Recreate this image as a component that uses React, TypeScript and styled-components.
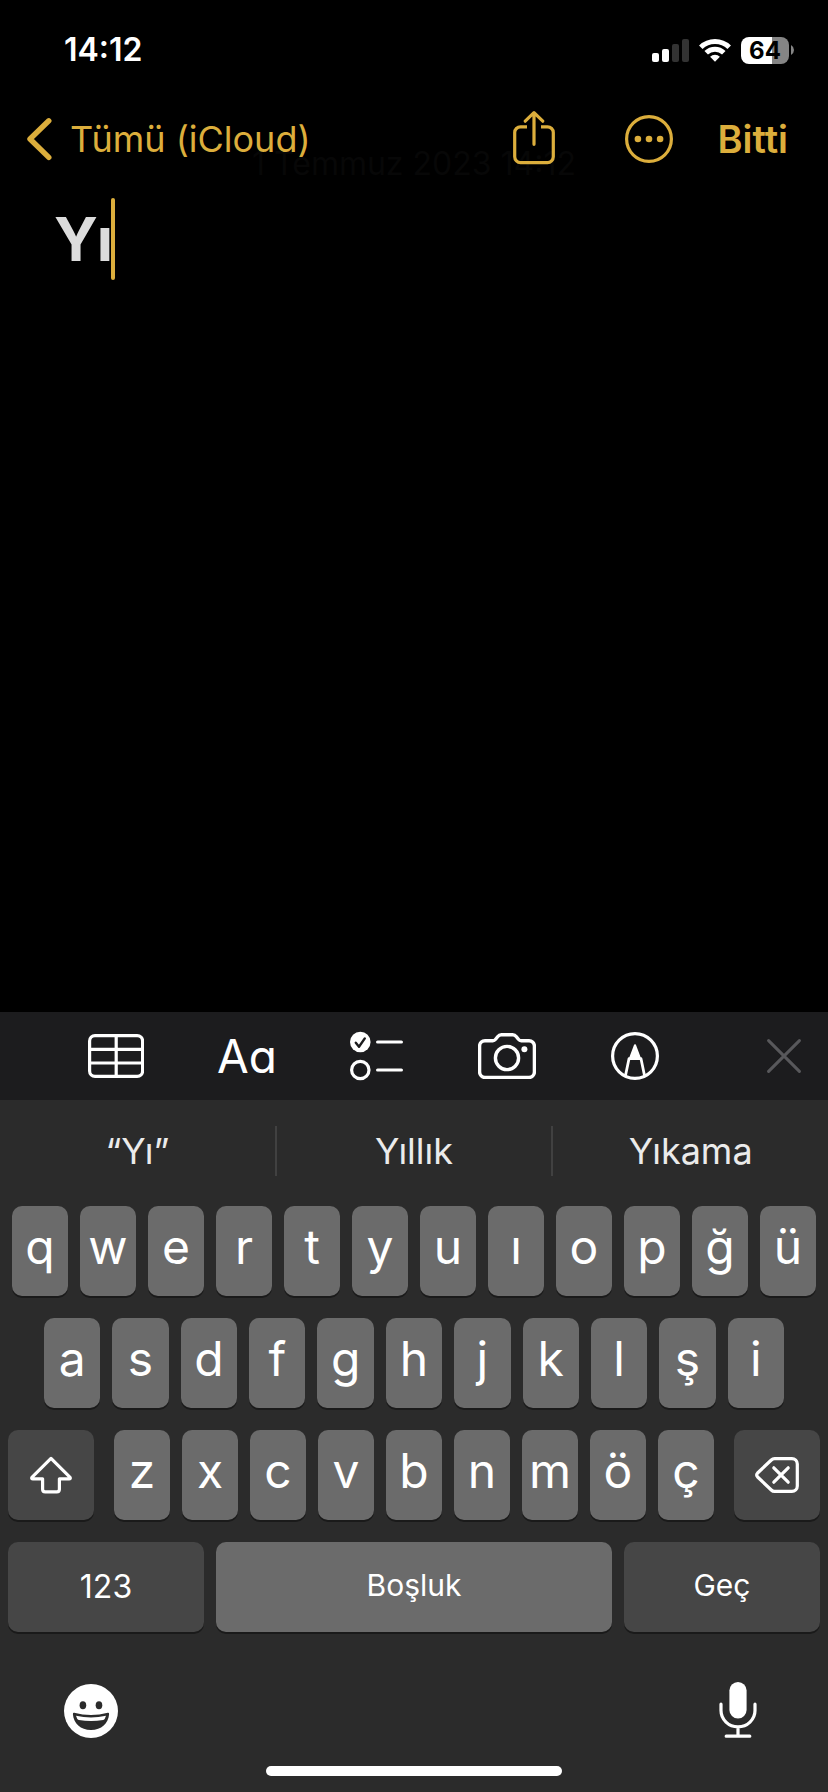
import React, { useState } from "react";
import styled, { createGlobalStyle } from "styled-components";

const gold = "#dcae3c";

const GlobalStyle = createGlobalStyle`
  *, *::before, *::after { box-sizing: border-box; }
  html, body { margin: 0; background: #000; }
  body, button, textarea { font-family: Inter, "Noto Sans", sans-serif; }
  svg { display: block; flex: none; }
`;

const Screen = styled.div`
  display: flex;
  flex-direction: column;
  min-height: 100vh;
  background: #000;
`;

const PlainButton = styled.button`
  display: flex;
  align-items: center;
  justify-content: center;
  margin: 0;
  padding: 0;
  border: 0;
  background: none;
  color: inherit;
  cursor: pointer;
`;

const StatusBar = styled.div`
  display: flex;
  align-items: center;
  justify-content: space-between;
  height: 100px;
  padding: 0 34px 0 64px;
  color: #fff;
`;

const Clock = styled.time`
  font-size: 32px;
  font-weight: 600;
  line-height: 40px;
`;

const StatusIcons = styled.div`
  display: flex;
  align-items: center;
  gap: 10px;
`;

const Battery = styled.div`
  display: flex;
  align-items: center;
  gap: 2px;
`;

const BatteryBody = styled.span`
  width: 48px;
  border-radius: 8px;
  background: linear-gradient(to right, #fff 64%, #858585 64%);
  color: #000;
  font-size: 24px;
  font-weight: 700;
  line-height: 27px;
  text-align: center;
`;

const NavBar = styled.header`
  position: relative;
  display: flex;
  align-items: center;
  height: 78px;
  padding: 0 40px 0 26px;
  color: ${gold};
`;

const NoteDate = styled.p`
  position: absolute;
  left: 0;
  right: 0;
  bottom: -6px;
  margin: 0;
  color: #070707;
  font-size: 32px;
  line-height: 40px;
  text-align: center;
  pointer-events: none;
`;

const BackButton = styled(PlainButton)`
  position: relative;
  gap: 18px;
  font-size: 36px;
  line-height: 44px;
`;

const NavActions = styled.div`
  position: relative;
  display: flex;
  align-items: center;
  margin-left: auto;
`;

const NavIconButton = styled(PlainButton)`
  margin-right: 70px;

  & + & {
    margin-right: 44px;
  }
`;

const DoneButton = styled(PlainButton)`
  font-size: 38px;
  font-weight: 600;
  line-height: 44px;
`;

const Editor = styled.main`
  display: flex;
  flex: 1;
  align-items: flex-start;
  padding: 20px 54px;
`;

const NoteText = styled.textarea`
  field-sizing: content;
  margin: 0;
  padding: 0;
  border: 0;
  outline: 0;
  resize: none;
  background: none;
  color: #dcdcdc;
  caret-color: transparent;
  font-size: 60px;
  font-weight: 700;
  line-height: 82px;
`;

const Caret = styled.span`
  width: 4px;
  height: 82px;
  margin-left: -2px;
  border-radius: 2px;
  background: ${gold};
`;

const FormatBar = styled.div`
  display: flex;
  align-items: center;
  gap: 75px;
  height: 88px;
  padding: 0 27px 0 88px;
  background: #1c1c1e;
  color: #fff;
`;

const TextStyleButton = styled(PlainButton)`
  width: 56px;
  font-size: 46px;
  font-weight: 400;
  line-height: 48px;
  font-feature-settings: "cv11";
`;

const CloseButton = styled(PlainButton)`
  margin-left: auto;
  color: #58585b;
`;

const Keyboard = styled.section`
  display: flex;
  flex-direction: column;
  background: #2b2b2b;
  color: #fff;
`;

const Suggestions = styled.div`
  display: flex;
  margin: 26px 0 30px;
`;

const Suggestion = styled(PlainButton)`
  flex: 1;
  height: 50px;
  color: #ebebeb;
  font-size: 36px;
  line-height: 44px;

  & + & {
    border-left: 2px solid #414141;
  }
`;

const Keys = styled.div`
  display: flex;
  flex-direction: column;
  gap: 22px;
`;

const KeyRow = styled.div<{ $inset: number }>`
  display: flex;
  gap: 12px;
  padding: 0 ${(p) => p.$inset}px;
`;

const LetterGroup = styled.div`
  display: flex;
  flex: 1;
  gap: 12px;
  margin: 0 8px;
`;

const Key = styled(PlainButton)<{ $dark?: boolean }>`
  flex: 1 1 0;
  min-width: 0;
  height: 90px;
  border-radius: 10px;
  background: ${(p) => (p.$dark ? "#464646" : "#6b6b6b")};
  box-shadow: 0 2px 0 #1a1a1a;
`;

const LetterKey = styled(Key)`
  padding-bottom: 8px;
  font-size: 48px;
  font-weight: 400;
  line-height: 56px;
`;

const SideKey = styled(Key)`
  flex: 0 0 86px;
`;

const WordKey = styled(Key)`
  flex-grow: 49;
  padding-bottom: 4px;
  font-size: 30px;
  line-height: 40px;
`;

const SpaceKey = styled(WordKey)`
  flex-grow: 99;
`;

const NumberKey = styled(WordKey)`
  padding-bottom: 0;
  font-size: 32px;
`;

const KeyboardFooter = styled.div`
  display: flex;
  align-items: flex-end;
  justify-content: space-between;
  margin-top: 50px;
  padding: 0 71px 0 64px;
`;

const HomeIndicator = styled.div`
  align-self: center;
  width: 296px;
  height: 10px;
  margin: 28px 0 16px;
  border-radius: 5px;
  background: #fff;
`;

const SignalIcon = () => (
  <svg width="37" height="23" viewBox="0 0 37 23" fill="#fff">
    <rect x="0" y="14" width="7" height="9" rx="2" />
    <rect x="10" y="10" width="7" height="13" rx="2" />
    <rect x="20" y="5" width="7" height="18" rx="2" fill="#333" />
    <rect x="30" y="0" width="7" height="23" rx="2" fill="#333" />
  </svg>
);

const WifiIcon = () => (
  <svg width="32" height="24" viewBox="0 0 32 24" fill="none" stroke="#fff" strokeWidth="5">
    <path d="M1.8 9.2a20.3 20.3 0 0 1 28.4 0" />
    <path d="M7.2 14.8a12.6 12.6 0 0 1 17.6 0" />
    <path d="M16 23.8l-4.9-5a7 7 0 0 1 9.8 0z" fill="#fff" stroke="none" />
  </svg>
);

const BatteryTip = () => (
  <svg width="3" height="10" viewBox="0 0 3 10" fill="#858585">
    <path d="M0 0q3 1.8 3 5t-3 5z" />
  </svg>
);

const ChevronIcon = () => (
  <svg width="26" height="44" viewBox="0 0 26 44" fill="none" stroke="currentColor" strokeWidth="5.4" strokeLinecap="round" strokeLinejoin="round">
    <path d="M22.8 3.8L4 22l18.8 18.4" />
  </svg>
);

const ShareIcon = () => (
  <svg width="42" height="58" viewBox="0 1 42 58" fill="none" stroke="currentColor" strokeWidth="3.2" strokeLinejoin="round">
    <path d="M14 17.8H7.5a5.8 5.8 0 0 0-5.8 5.8v24.2a5.8 5.8 0 0 0 5.8 5.8h27a5.8 5.8 0 0 0 5.8-5.8V23.6a5.8 5.8 0 0 0-5.8-5.8H28" />
    <path d="M21 3.8v31.5M12.2 12.2L21 3.6l8.8 8.6" strokeLinecap="round" />
  </svg>
);

const MoreIcon = () => (
  <svg width="48" height="48" viewBox="0 0 48 48" fill="currentColor">
    <circle cx="24" cy="24" r="22.4" fill="none" stroke="currentColor" strokeWidth="3.2" />
    <circle cx="12.9" cy="24" r="3.3" />
    <circle cx="24" cy="24" r="3.3" />
    <circle cx="35.1" cy="24" r="3.3" />
  </svg>
);

const TableIcon = () => (
  <svg width="56" height="44" viewBox="0 0 56 44" fill="none" stroke="currentColor" strokeWidth="3.2">
    <rect x="1.6" y="1.6" width="53" height="40.8" rx="5.4" />
    <path d="M1.6 15.4h53M1.6 29h53M28.2 1.6v40.8" />
  </svg>
);

const ChecklistIcon = () => (
  <svg width="53" height="50" viewBox="0 0 53 50" fill="none" stroke="currentColor" strokeWidth="3.2" strokeLinecap="round" strokeLinejoin="round">
    <circle cx="10.3" cy="11" r="10.3" fill="currentColor" stroke="none" />
    <path d="M5.8 11.8l3.2 4 5.8-8.4" stroke="#1c1c1e" strokeWidth="2.4" />
    <circle cx="10.3" cy="39" r="8.7" />
    <path d="M27.6 11h23.8M27.6 39h23.8" />
  </svg>
);

const CameraIcon = () => (
  <svg width="58" height="46" viewBox="0 0 58 46" fill="none" stroke="currentColor" strokeWidth="3.4" strokeLinejoin="round">
    <path d="M7 7.7h7.8c1.4 0 2-.5 2.8-1.5l2-2.500c1-1.300 2-2 3.800-2h11.200c1.800 0 2.800.7 3.800 2l2 2.500c.8 1 1.400 1.500 2.800 1.500H51a5.400 5.400 0 0 1 5.400 5.400v26a5.400 5.400 0 0 1-5.400 5.400H7a5.400 5.400 0 0 1-5.400-5.400v-26A5.400 5.400 0 0 1 7 7.700z" />
    <circle cx="29" cy="25" r="11.6" />
    <circle cx="46.4" cy="16.2" r="3" fill="currentColor" stroke="none" />
  </svg>
);

const MarkupIcon = () => (
  <svg width="48" height="48" viewBox="0 0 48 48" fill="none" stroke="currentColor" strokeWidth="3.2">
    <circle cx="24" cy="24" r="22.4" />
    <path d="M24 13.2l4.8 12.6h-9.6z" fill="currentColor" strokeWidth="2" strokeLinejoin="round" />
    <path d="M14.4 44l3.6-17.3h12L33.6 44" strokeWidth="2.8" strokeLinejoin="round" />
  </svg>
);

const CloseIcon = () => (
  <svg width="34" height="34" viewBox="0 0 34 34" fill="none" stroke="currentColor" strokeWidth="3" strokeLinecap="round">
    <path d="M1.6 1.6l30.8 30.8M32.4 1.6L1.6 32.4" />
  </svg>
);

const ShiftIcon = () => (
  <svg width="42" height="38" viewBox="0 0 42 38" fill="none" stroke="currentColor" strokeWidth="3.2" strokeLinejoin="round">
    <path d="M21 2.4L1.9 21.4q-.7 1.4 1 1.4h9.7v10.4q0 2.6 2.6 2.6h11.6q2.6 0 2.6-2.6V22.8h9.7q1.7 0 1-1.4z" />
  </svg>
);

const DeleteIcon = () => (
  <svg width="44" height="36" viewBox="0 0 44 36" fill="none" stroke="currentColor" strokeWidth="3.2" strokeLinecap="round" strokeLinejoin="round">
    <path d="M19.6 1.6h17.3a5.4 5.4 0 0 1 5.4 5.4v22a5.4 5.4 0 0 1-5.4 5.4H19.6q-1.9 0-3.3-1.4L2.6 20q-1.8-2 0-4L16.3 3q1.4-1.4 3.3-1.4z" />
    <path d="M18.8 10.8l14.4 14.4M33.2 10.8L18.8 25.2" />
  </svg>
);

const EmojiIcon = () => (
  <svg width="54" height="54" viewBox="0 0 54 54">
    <circle cx="27" cy="27" r="27" fill="#fff" />
    <g fill="#2b2b2b">
      <ellipse cx="18.9" cy="21.2" rx="3.3" ry="4" />
      <ellipse cx="35" cy="21.2" rx="3.3" ry="4" />
      <path d="M10.2 28.8q16.8 4.4 33.6 0 1.4-.2 1.3 1.4C44.4 39.2 37.4 46 27 46S9.6 39.2 8.9 30.2q-.1-1.6 1.3-1.4z" />
    </g>
    <path d="M12 31.8q15 3.4 30 0l-1.2 3q-.5 1-1.6 1.2-12.2 2.2-24.4 0-1.1-.2-1.6-1.2z" fill="#fff" />
  </svg>
);

const MicIcon = () => (
  <svg width="38" height="56" viewBox="0 0 38 56" fill="none" stroke="#fff" strokeWidth="3.2" strokeLinecap="round">
    <rect x="10.4" y="0" width="17.2" height="36.6" rx="8.6" fill="#fff" stroke="none" />
    <path d="M2 22.2v6.4a17 16.2 0 0 0 34 0v-6.4M19 45v9M7.2 54.2h23.6" />
  </svg>
);

const firstRow = [..."qwertyuıopğü"];
const secondRow = [..."asdfghjklşi"];
const thirdRow = [..."zxcvbnmöç"];
const suggestions = ["“Yı”", "Yıllık", "Yıkama"];

const Letters = ({ letters, onType }: { letters: string[]; onType: (c: string) => void }) => (
  <>
    {letters.map((c) => (
      <LetterKey key={c} type="button" onClick={() => onType(c)}>
        {c}
      </LetterKey>
    ))}
  </>
);

export default function App() {
  const [note, setNote] = useState("Yı");
  const type = (c: string) => setNote((n) => n + c);

  return (
    <Screen lang="tr">
      <GlobalStyle />
      <StatusBar>
        <Clock>14:12</Clock>
        <StatusIcons>
          <SignalIcon />
          <WifiIcon />
          <Battery>
            <BatteryBody>64</BatteryBody>
            <BatteryTip />
          </Battery>
        </StatusIcons>
      </StatusBar>

      <NavBar>
        <NoteDate>1 Temmuz 2023 14:12</NoteDate>
        <BackButton type="button">
          <ChevronIcon />
          Tümü (iCloud)
        </BackButton>
        <NavActions>
          <NavIconButton type="button" aria-label="Paylaş"><ShareIcon /></NavIconButton>
          <NavIconButton type="button" aria-label="Daha fazla"><MoreIcon /></NavIconButton>
          <DoneButton type="button">Bitti</DoneButton>
        </NavActions>
      </NavBar>

      <Editor>
        <NoteText aria-label="Not" rows={1} value={note} onChange={(e) => setNote(e.target.value)} />
        <Caret />
      </Editor>

      <FormatBar>
        <PlainButton type="button" aria-label="Tablo"><TableIcon /></PlainButton>
        <TextStyleButton type="button">Aa</TextStyleButton>
        <PlainButton type="button" aria-label="Liste"><ChecklistIcon /></PlainButton>
        <PlainButton type="button" aria-label="Kamera"><CameraIcon /></PlainButton>
        <PlainButton type="button" aria-label="İşaretle"><MarkupIcon /></PlainButton>
        <CloseButton type="button" aria-label="Kapat"><CloseIcon /></CloseButton>
      </FormatBar>

      <Keyboard>
        <Suggestions>
          {suggestions.map((s) => (
            <Suggestion key={s} type="button">{s}</Suggestion>
          ))}
        </Suggestions>
        <Keys>
          <KeyRow $inset={12}><Letters letters={firstRow} onType={type} /></KeyRow>
          <KeyRow $inset={44}><Letters letters={secondRow} onType={type} /></KeyRow>
          <KeyRow $inset={8}>
            <SideKey type="button" $dark aria-label="Büyük harf"><ShiftIcon /></SideKey>
            <LetterGroup><Letters letters={thirdRow} onType={type} /></LetterGroup>
            <SideKey type="button" $dark aria-label="Sil" onClick={() => setNote((n) => n.slice(0, -1))}>
              <DeleteIcon />
            </SideKey>
          </KeyRow>
          <KeyRow $inset={8}>
            <NumberKey type="button" $dark>123</NumberKey>
            <SpaceKey type="button" onClick={() => type(" ")}>Boşluk</SpaceKey>
            <WordKey type="button" $dark onClick={() => type("\n")}>Geç</WordKey>
          </KeyRow>
        </Keys>
        <KeyboardFooter>
          <PlainButton type="button" aria-label="Emoji"><EmojiIcon /></PlainButton>
          <PlainButton type="button" aria-label="Dikte"><MicIcon /></PlainButton>
        </KeyboardFooter>
        <HomeIndicator />
      </Keyboard>
    </Screen>
  );
}
